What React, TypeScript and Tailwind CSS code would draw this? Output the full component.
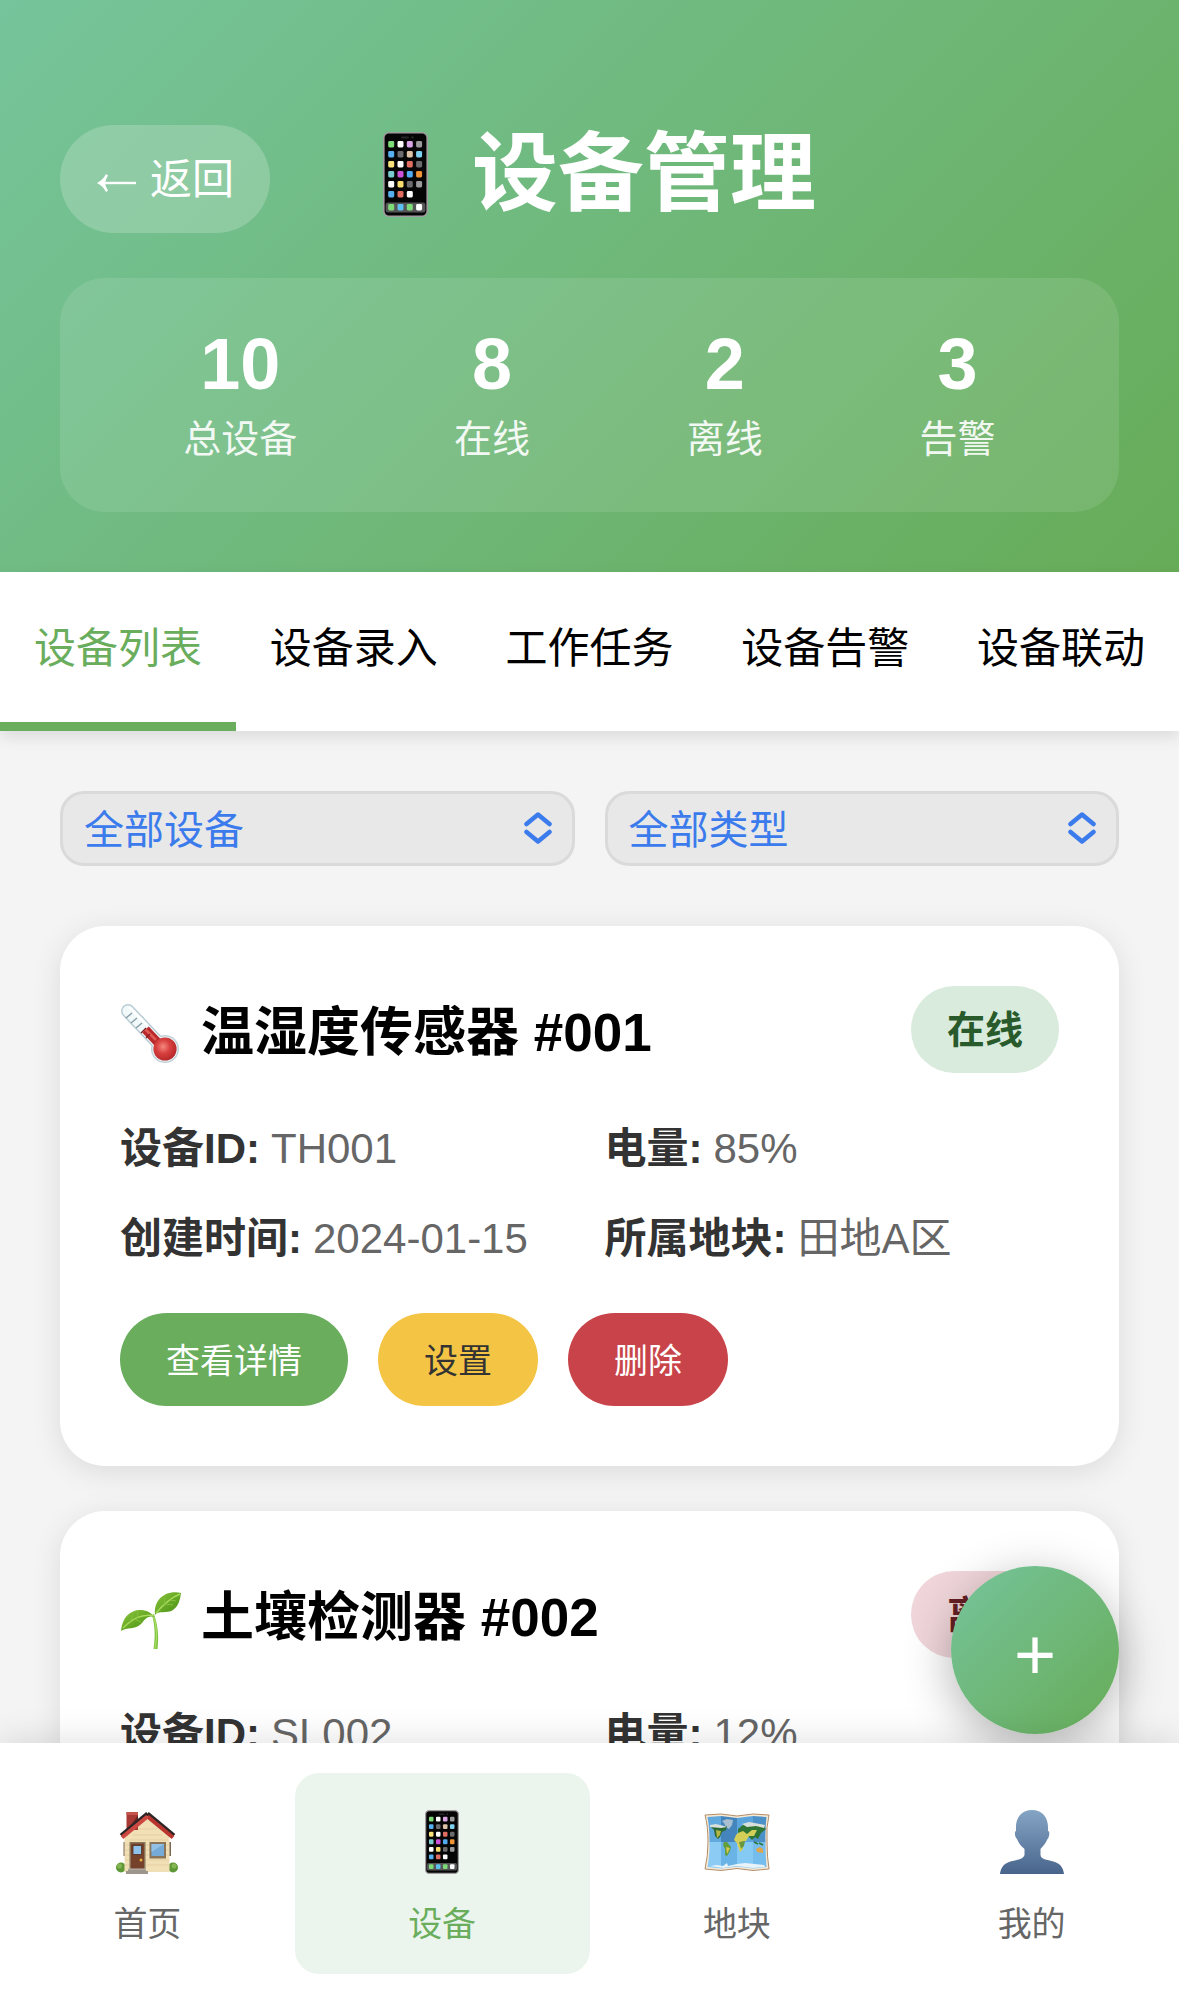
import { useState } from 'react';

const APP_ROWS = [
  ['#7ddb78', '#ffffff', '#d9a5e6', '#9a9a9c'],
  ['#56b0f0', '#6b6b6d', '#dcc3a6', '#7dd0ef'],
  ['#fae27a', '#ffffff', '#e06d62', '#6b6b6d'],
  ['#7acbd0', '#cb52d6', '#52aaf0', '#ef9436'],
  ['#ffffff', '#fadf6f', '#6b6b6d', '#9a9a9c'],
  ['#56b0f0', '#e06d62', '#ffffff'],
  ['#7ddb78', '#5cc0f0', '#7ddb78', '#ffffff'],
];
const ROW_Y = [9, 19, 29, 39, 49, 59, 72];

function PhoneIcon({ className }: { className: string }) {
  return (
    <svg viewBox="0 0 45 85" className={className} aria-hidden="true">
      <rect x="0.8" y="0.8" width="43.4" height="83.4" rx="5" fill="#050505" stroke="#a09ca0" strokeWidth="1.6" />
      <rect x="18" y="4.5" width="8" height="2" rx="1" fill="#262628" />
      <circle cx="29.5" cy="5.5" r="1.2" fill="#262628" />
      <rect x="2.6" y="70.5" width="39.8" height="10" rx="2.5" fill="#555557" />
      {APP_ROWS.map((row, r) =>
        row.map((color, c) => (
          <rect key={`${r}-${c}`} x={5.2 + c * 9.3} y={ROW_Y[r]} width="6" height="6.4" rx="1.4" fill={color} />
        )),
      )}
    </svg>
  );
}

function ThermometerIcon() {
  return (
    <svg viewBox="0 0 60 60" className="h-[60px] w-[60px]" aria-hidden="true">
      <defs>
        <radialGradient id="bulb" cx="0.42" cy="0.4" r="0.65">
          <stop offset="0" stopColor="#f58a80" />
          <stop offset="0.45" stopColor="#d8413f" />
          <stop offset="1" stopColor="#b32428" />
        </radialGradient>
      </defs>
      <path d="M8 8 L44 46" stroke="#b9cdd5" strokeWidth="14" strokeLinecap="round" />
      <circle cx="45" cy="46" r="14" fill="#c3d1d8" />
      <path d="M8 8 L44 46" stroke="#f2f9fb" strokeWidth="11" strokeLinecap="round" />
      <circle cx="45" cy="46" r="12.6" fill="#eaf1f3" />
      <path d="M25.500 26.500 L42 44" stroke="#b9292c" strokeWidth="9" />
      <path d="M25 26 L36 37" stroke="#e05a54" strokeWidth="2.500" />
      <circle cx="45" cy="46" r="11.600" fill="url(#bulb)" />
      <path d="M6 15 l6 -5 M11 20 l6 -5 M16 25 l6 -5" stroke="#879ba4" strokeWidth="1.400" />
      <path d="M21 30 l5 -5 M26 35 l4 -4" stroke="#7d1f24" strokeWidth="1.200" />
      <path d="M10 5 L27 22" stroke="#ffffff" strokeWidth="2.500" strokeLinecap="round" />
    </svg>
  );
}

function SeedlingIcon() {
  return (
    <svg viewBox="0 -6 62 64" className="h-[64px] w-[62px]" aria-hidden="true">
      <defs>
        <linearGradient id="leaf" x1="0" y1="0" x2="1" y2="1">
          <stop offset="0" stopColor="#8cc63c" />
          <stop offset="0.6" stopColor="#5fa321" />
          <stop offset="1" stopColor="#4c8c1c" />
        </linearGradient>
      </defs>
      <path d="M34 22 C38 34 39 44 37.500 57 L33.500 57 C35.500 44 35 34 32 23 Z" fill="#7fc243" />
      <path d="M33 23 C37 34 37.500 46 35 57" fill="none" stroke="#a5dc62" strokeWidth="1.300" />
      <path d="M1 39 C2 25 11 17 22 18 C29 19 32 22 34 25 C27 23 25 28 21 32 C15 38 7 35 1 39 Z" fill="url(#leaf)" />
      <path d="M35 23 C34 13 38 6 46 2 C51 0 57 0 61 1 C60 7 59 14 53 18 C47 22 38 18 35 23 Z" fill="url(#leaf)" />
      <path d="M3 36 C12 27 20 22 33 23.500" fill="none" stroke="#a8da5b" strokeWidth="1.400" />
      <path d="M36 21 C42 14 50 6 60 2" fill="none" stroke="#a8da5b" strokeWidth="1.400" />
      <path d="M10 30 l3 -7 M17 26 l1 -6 M14 27 l7 3 M44 13 l1 -7 M50 8 l6 1 M45 12 l8 1" stroke="#87bf3e" strokeWidth="1" />
    </svg>
  );
}

function HouseIcon() {
  return (
    <svg viewBox="0 0 62 63" className="h-[63px] w-[62px]" aria-hidden="true">
      <circle cx="5" cy="56.500" r="5" fill="#5e9836" />
      <circle cx="3.500" cy="55" r="2.500" fill="#83b652" />
      <circle cx="57" cy="56.500" r="5" fill="#5e9836" />
      <circle cx="58" cy="55" r="2.500" fill="#83b652" />
      <path d="M7.500 31 h2 v14 h-2z M53 31 h2 v14 h-2z" fill="#7b6a53" />
      <path d="M8.500 24 L32 5 L53.500 24 V61 H8.500Z" fill="#f1dfb5" />
      <path d="M9 34 H53 M9 39 H53 M9 44 H53 M9 49 H53 M9 54 H53 M17 24 H46 M14 29 H52 M22 18 H41" stroke="#dfca9a" strokeWidth="0.700" />
      <rect x="10.500" y="1" width="11.500" height="18" fill="#a83a35" />
      <rect x="10.500" y="1" width="11.500" height="3" fill="#c4544c" />
      <path d="M22 4 v9 l-11.500 9 v-2z" fill="#6f2524" />
      <path d="M31.500 2.500 L5 24.500" stroke="#2c2526" strokeWidth="4" />
      <path d="M31.500 2.500 L58 24.500" stroke="#2c2526" strokeWidth="4" />
      <path d="M31.500 5.500 L57 26.500" stroke="#b9352f" strokeWidth="4" />
      <path d="M31.500 5.500 L6 26.500" stroke="#cb4740" strokeWidth="4" />
      <rect x="13.500" y="31" width="16" height="28" fill="#8a7558" />
      <rect x="15" y="32.500" width="13" height="26.500" fill="#75412a" />
      <rect x="17" y="34.500" width="8.500" height="9" fill="#8fc2ea" stroke="#54301f" strokeWidth="0.800" />
      <circle cx="25" cy="49" r="1.500" fill="#e6b23c" />
      <rect x="33.500" y="31" width="16.500" height="16.500" fill="#8a7558" />
      <rect x="35.500" y="33" width="12.500" height="12" fill="#76abd8" />
      <path d="M35.500 33 H48 L35.500 41z" fill="#93c1e6" />
      <path d="M12 58 h18 v2 h2 v3 H10 v-3 h2z" fill="#9d968c" />
      <path d="M12 58 h18" stroke="#c0b9ae" strokeWidth="1" />
    </svg>
  );
}

function MapIcon() {
  return (
    <svg viewBox="0 0 66 58" className="h-[58px] w-[66px]" aria-hidden="true">
      <path d="M1 2 L17 1 L33 3 L49 1 L65 2 Q62 14 63 29 Q63 44 65 56 L49 57.500 L33 55.500 L17 57.500 L1 56 Q4 43 4 29 Q4 13 1 2Z" fill="#f5ead8" stroke="#b48d67" strokeWidth="1" />
      <path d="M3.500 4 L17 3 V29 H5.500 Q5.500 15 3.500 4Z" fill="#62a9de" />
      <path d="M17 3 L33 5 V29 H17Z" fill="#4485bd" />
      <path d="M33 5 L49 3 V29 H33Z" fill="#5ba5dc" />
      <path d="M49 3 L62.500 4 Q61 17 61.500 29 H49Z" fill="#4b91c8" />
      <path d="M5.500 29 H17 V55.500 L3.500 54 Q6 40 5.500 29Z" fill="#8bcbf4" />
      <path d="M17 29 H33 V53.500 L17 55.500Z" fill="#69b3e6" />
      <path d="M33 29 H49 V55.500 L33 53.500Z" fill="#85c9f5" />
      <path d="M49 29 H61.500 Q61.500 43 62.500 54 L49 55.500Z" fill="#74bdec" />
      <path d="M18 8 l5 -2 6 1 -1 5 -3 4 -3 -2 -2 -4z" fill="#a8bfd0" />
      <path d="M6 13 l5 -1 7 2 5 -1 -1 4 -4 2 -2 5 -2 2 -3 -3 -1 -6z" fill="#2c6b34" />
      <path d="M12 17 l5 1 -1 4 -3 3z" fill="#b7b545" />
      <path d="M6 12 l6 -1 8 2 3 1 -6 1 -11 -1z" fill="#d8e0dc" />
      <path d="M20 29 l3 0 4 5 -1 4 -3 5 -2 -1 0 -6 -2 -4z" fill="#629e39" />
      <path d="M22 34 l4 1 -3 6z" fill="#d7c74a" />
      <path d="M34 16 l5 -4 8 -1 12 2 3 3 -5 4 -3 6 -3 -2 -3 3 -4 -4 -3 3 -7 -4z" fill="#2f7535" />
      <path d="M34 20 l5 -2 4 3 5 -4 5 0 -3 6 -5 0 -3 5 -3 0 0 8 -3 3 -3 -9 -3 -3 2 -5z" fill="#d5cf57" />
      <path d="M35 29 l6 -1 -1 5 -3 3z" fill="#68983b" />
      <path d="M38 11 l7 -2 16 3 -1 3 -8 -2 -9 1z" fill="#d9e0da" />
      <path d="M52 36 l4 -2 3 2 0 4 -6 -1z" fill="#dfa54a" />
      <path d="M50 29 l4 2 M55 30 l4 2" stroke="#2f7535" strokeWidth="1.500" />
      <path d="M6 53 l7 -1 6 1 4 -3 1 3 9 -2 8 -1 10 1 9 1 1 2 -12 1 -16 -2 -14 2z" fill="#e9f3fa" />
    </svg>
  );
}

function PersonIcon() {
  return (
    <svg viewBox="0 0 64 64" className="h-16 w-16" aria-hidden="true">
      <defs>
        <linearGradient id="person" x1="0" y1="0" x2="0" y2="1">
          <stop offset="0" stopColor="#85a5c5" />
          <stop offset="1" stopColor="#48648b" />
        </linearGradient>
      </defs>
      <path
        d="M32 0 C42 0 48 7 48 17 L48 21 C50.500 21 49 28 47.500 29 C46 33 43 36 40.500 39 V45 C41 50 48 49.500 55 52 C61 54 63.500 59 64 64 H0 C0.500 59 3 54 9 52 C16 49.500 23 50 24.500 45 V39 C21 36 18.500 33 17 29 C15 28 14 21 16 21 L16 17 C16 7 22 0 32 0Z"
        fill="url(#person)"
      />
    </svg>
  );
}

const stats = [
  { value: 10, label: '总设备' },
  { value: 8, label: '在线' },
  { value: 2, label: '离线' },
  { value: 3, label: '告警' },
];

const tabs = ['设备列表', '设备录入', '工作任务', '设备告警', '设备联动'];

const devices = [
  {
    name: '温湿度传感器 #001',
    icon: <ThermometerIcon />,
    online: true,
    info: [
      ['设备ID:', 'TH001'],
      ['电量:', '85%'],
      ['创建时间:', '2024-01-15'],
      ['所属地块:', '田地A区'],
    ],
  },
  {
    name: '土壤检测器 #002',
    icon: <SeedlingIcon />,
    online: false,
    info: [
      ['设备ID:', 'SL002'],
      ['电量:', '12%'],
    ],
  },
];

const navItems = [
  { label: '首页', icon: <HouseIcon /> },
  { label: '设备', icon: <PhoneIcon className="h-16 w-[34px]" /> },
  { label: '地块', icon: <MapIcon /> },
  { label: '我的', icon: <PersonIcon /> },
];

function FilterSelect({ label, options }: { label: string; options: string[] }) {
  return (
    <div className="relative flex-1">
      <select
        aria-label={label}
        className="block h-[75px] w-full appearance-none rounded-3xl border-3 border-[#dadada] bg-[#e8e8e8] pt-0.5 pr-16 pl-[21px] text-[40px] leading-[60px] text-[#3b7bec]"
      >
        {options.map((o) => (
          <option key={o}>{o}</option>
        ))}
      </select>
      <svg
        viewBox="0 0 28 32"
        className="pointer-events-none absolute top-[21px] right-[23px] h-8 w-7"
        fill="none"
        stroke="#3b7bec"
        strokeWidth="4.5"
        strokeLinecap="round"
        strokeLinejoin="round"
        aria-hidden="true"
      >
        <path d="M2.500 12 L14 2.500 L25.500 12 M2.500 20 L14 29.500 L25.500 20" />
      </svg>
    </div>
  );
}

function DeviceCard({ device }: { device: (typeof devices)[number] }) {
  return (
    <article className="rounded-[45px] bg-white p-[60px] shadow-[0_6px_30px_rgba(0,0,0,0.1)]">
      <div className="flex items-center justify-between">
        <h2 className="flex items-center gap-[15px] pt-1.5 text-[53px] leading-[72px] font-bold text-black">
          <span className="flex w-[66px] items-center">{device.icon}</span>
          <span>{device.name}</span>
        </h2>
        <span
          className={
            device.online
              ? 'rounded-full bg-[#d9ebdc] px-9 pt-0.5 text-[38px] leading-[85px] font-bold text-[#285a2c]'
              : 'rounded-full bg-[#f0d6da] px-9 pt-0.5 text-[38px] leading-[85px] font-bold text-[#661f25]'
          }
        >
          {device.online ? '在线' : '离线'}
        </span>
      </div>
      <dl className="mt-[46px] grid grid-cols-2 gap-[30px] text-[42px] leading-[60px]">
        {device.info.map(([k, v]) => (
          <div key={k} className="flex gap-[11px] whitespace-nowrap">
            <dt className="font-bold text-[#333333]">{k}</dt>
            <dd className="text-[#666666]">{v}</dd>
          </div>
        ))}
      </dl>
      <div className="mt-[44px] flex gap-[30px] text-[34px] leading-[89px]">
        <button type="button" className="rounded-full bg-[#69ad5d] px-[46px] pt-1 text-white">查看详情</button>
        <button type="button" className="rounded-full bg-[#f4c444] px-[46px] pt-1 text-[#333333]">设置</button>
        <button type="button" className="rounded-full bg-[#c8444a] px-[46px] pt-1 text-white">删除</button>
      </div>
    </article>
  );
}

export default function App() {
  const [tab, setTab] = useState(0);
  return (
    <div className="relative flex h-screen flex-col overflow-hidden bg-[#f4f4f4] font-['Liberation_Sans','Noto_Sans_CJK_SC',sans-serif]">
      <div className="min-h-0 flex-1 overflow-y-auto [scrollbar-width:none]">
        <header className="bg-[linear-gradient(135deg,#76c49b,#67ac58)] px-[60px] pt-[125px] pb-[60px] text-white">
          <div className="grid grid-cols-[1fr_auto_1fr] items-start">
            <button
              type="button"
              className="flex items-center gap-3 justify-self-start rounded-full bg-white/20 px-9 pt-0.5 text-[42px] leading-[106px]"
            >
              <svg viewBox="0 0 42 20" className="mt-1.5 h-5 w-[42px]" aria-hidden="true">
                <path d="M9 10 H40" stroke="currentColor" strokeWidth="2.400" fill="none" />
                <path d="M1 10 Q7 7 10 1 L12 2.500 Q9.500 6.500 9 10 Q9.500 13.500 12 17.500 L10 19 Q7 13 1 10Z" fill="currentColor" />
              </svg>
              返回
            </button>
            <h1 className="flex items-center gap-6 text-[86px] leading-[98px] font-bold">
              <PhoneIcon className="mx-5 h-[85px] w-[45px]" />
              设备管理
            </h1>
          </div>
          <dl className="mt-[45px] flex justify-around rounded-[45px] bg-white/10 p-[45px]">
            {stats.map((s) => (
              <div key={s.label} className="flex flex-col-reverse gap-1.5 text-center">
                <dt className="text-[38px] leading-[56px] opacity-90">{s.label}</dt>
                <dd className="text-[72px] leading-[82px] font-bold">{s.value}</dd>
              </div>
            ))}
          </dl>
        </header>

        <div role="tablist" className="flex bg-white shadow-[0_6px_15px_rgba(0,0,0,0.1)]">
          {tabs.map((t, i) => (
            <button
              key={t}
              type="button"
              role="tab"
              aria-selected={i === tab}
              onClick={() => setTab(i)}
              className={
                i === tab
                  ? 'flex-1 border-b-9 border-[#69ad5d] pt-1 text-[42px] leading-[146px] whitespace-nowrap text-[#69ad5d]'
                  : 'flex-1 border-b-9 border-transparent pt-1 text-[42px] leading-[146px] whitespace-nowrap text-black'
              }
            >
              {t}
            </button>
          ))}
        </div>

        <main className="flex flex-col p-[60px]">
          <div className="flex gap-[30px]">
            <FilterSelect label="设备状态" options={['全部设备', '在线', '离线']} />
            <FilterSelect label="设备类型" options={['全部类型', '温湿度传感器', '土壤检测器']} />
          </div>
          <div className="mt-[60px] flex flex-col gap-[45px]">
            {devices.map((d) => (
              <DeviceCard key={d.name} device={d} />
            ))}
          </div>
        </main>
      </div>

      <div className="relative">
        <button
          type="button"
          aria-label="添加设备"
          className="absolute right-[60px] bottom-[9px] size-[168px] rounded-full bg-[linear-gradient(135deg,#76c49b,#67ac58)] pt-2 text-[72px] leading-[160px] text-white shadow-[0_12px_48px_rgba(0,0,0,0.3)]"
        >
          +
        </button>
      </div>

      <nav className="relative flex bg-white pt-[30px] pb-[25px] shadow-[0_-6px_30px_rgba(0,0,0,0.1)]">
        {navItems.map((n) => (
          <a
            key={n.label}
            href="#"
            aria-current={n.label === '设备' ? 'page' : undefined}
            className={
              n.label === '设备'
                ? 'flex flex-1 flex-col items-center rounded-3xl bg-[#ecf5ed] pt-[30px] pb-5 text-[#69ad5d]'
                : 'flex flex-1 flex-col items-center rounded-3xl pt-[30px] pb-5 text-[#666666]'
            }
          >
            <span className="flex h-[78px] items-center">{n.icon}</span>
            <span className="mt-[13px] text-[34px] leading-[60px]">{n.label}</span>
          </a>
        ))}
      </nav>
    </div>
  );
}
